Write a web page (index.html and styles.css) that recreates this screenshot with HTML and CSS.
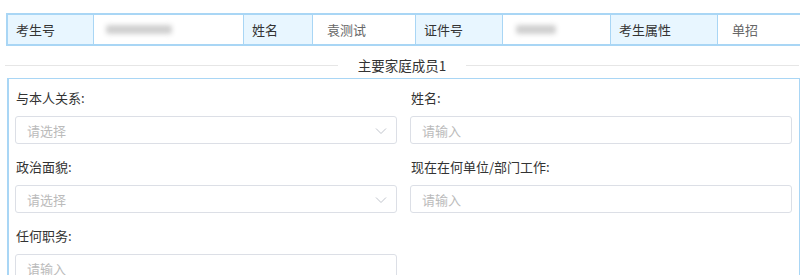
FILE: index.html
```html
<!DOCTYPE html>
<html lang="zh">
<head>
<meta charset="utf-8">
<link rel="stylesheet" href="styles.css">
</head>
<body>
<div class="page">
  <div class="info-table">
    <div class="cell head c1">考生号</div>
    <div class="cell val c2"><span class="blur b1"></span></div>
    <div class="cell head c3">姓名</div>
    <div class="cell val c4">袁测试</div>
    <div class="cell head c5">证件号</div>
    <div class="cell val c6"><span class="blur b2"></span></div>
    <div class="cell head c7">考生属性</div>
    <div class="cell val c8">单招</div>
  </div>

  <div class="divider">
    <span class="line"></span>
    <span class="divider-title">主要家庭成员1</span>
    <span class="line"></span>
  </div>

  <div class="card">
    <div class="grid">
      <div class="field">
        <div class="label">与本人关系:</div>
        <div class="box select"><span class="ph">请选择</span>
          <svg class="arrow" width="12" height="8" viewBox="0 0 12 8"><path d="M1 1.5 L6 6.5 L11 1.5" fill="none" stroke="#c0c4cc" stroke-width="1"/></svg>
        </div>
      </div>
      <div class="field">
        <div class="label">姓名:</div>
        <div class="box"><span class="ph">请输入</span></div>
      </div>
      <div class="field">
        <div class="label">政治面貌:</div>
        <div class="box select"><span class="ph">请选择</span>
          <svg class="arrow" width="12" height="8" viewBox="0 0 12 8"><path d="M1 1.5 L6 6.5 L11 1.5" fill="none" stroke="#c0c4cc" stroke-width="1"/></svg>
        </div>
      </div>
      <div class="field">
        <div class="label">现在在何单位/部门工作:</div>
        <div class="box"><span class="ph">请输入</span></div>
      </div>
      <div class="field">
        <div class="label">任何职务:</div>
        <div class="box"><span class="ph">请输入</span></div>
      </div>
    </div>
  </div>
</div>
</body>
</html>
```
FILE: styles.css
```css
* { box-sizing: border-box; }
html, body {
  margin: 0;
  padding: 0;
  background: #fff;
  overflow: hidden;
  width: 800px;
  height: 275px;
}
body {
  font-family: "Microsoft YaHei", "Noto Sans CJK SC", sans-serif;
  font-size: 13px;
  color: #333;
}
.page {
  padding: 13px 0 0 6px;
  width: 860px;
}
.info-table {
  display: grid;
  grid-template-columns: 85px 150px 69px 103px 87px 108px 107px 120px;
  border: 2px solid #a9d6f5;
  border-right: none;
  height: 33px;
  width: 831px;
}
.cell {
  display: flex;
  align-items: center;
  padding-left: 8px;
  border-left: 1px solid #a9d6f5;
  height: 29px;
  white-space: nowrap;
}
.cell.c1 { border-left: none; }
.head { background: #e8f6ff; color: #333; }
.val { background: #fff; color: #666; padding-left: 14px; }
.blur {
  display: block;
  height: 9px;
  background: #cfcfcf;
  filter: blur(2.5px);
  border-radius: 3px;
}
.b1 { width: 66px; margin-left: -2px; }
.b2 { width: 40px; margin-left: -1px; }

.divider {
  display: flex;
  align-items: center;
  margin-top: 8px;
  height: 22px;
  width: 794px;
  margin-left: -1px;
}
.divider .line {
  flex: 1;
  height: 1px;
  background: #e6e6e6;
}
.divider-title {
  padding: 0 20px;
  font-size: 13.5px;
  color: #333;
}
.card {
  margin-top: 2px;
  margin-left: 1px;
  width: 793px;
  height: 220px;
  border: 1px solid #a9d6f5;
  border-left-width: 2px;
  padding: 9px 6px 0 6px;
}
.grid {
  display: grid;
  grid-template-columns: 382px 382px;
  column-gap: 13px;
  row-gap: 13px;
}
.label {
  height: 20px;
  line-height: 20px;
  padding-left: 1px;
  color: #333;
  margin-bottom: 8px;
}
.box {
  height: 28px;
  border: 1px solid #dcdfe6;
  border-radius: 3px;
  display: flex;
  align-items: center;
  padding-left: 11px;
  position: relative;
}
.ph { color: #bbb; }
.arrow {
  position: absolute;
  right: 9px;
  top: 10px;
}
```
